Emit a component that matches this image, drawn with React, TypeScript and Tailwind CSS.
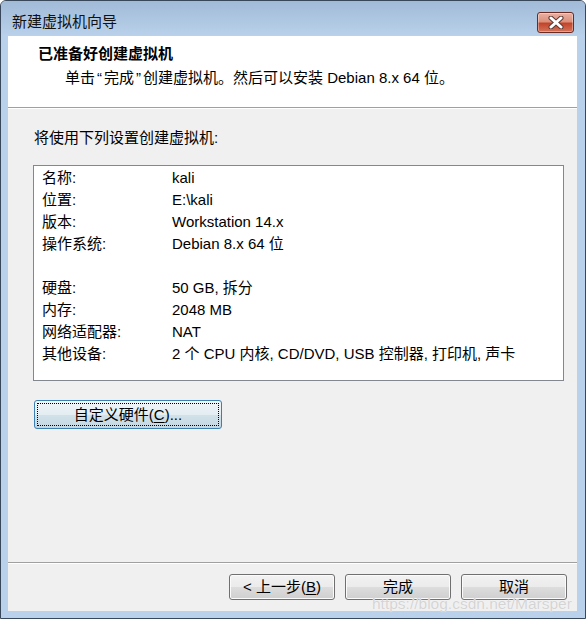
import React from 'react';

const FONT = "font-['Liberation_Sans','Noto_Sans_CJK_SC',sans-serif]";

const rows: [string, string][] = [
  ['名称:', 'kali'],
  ['位置:', 'E:\\kali'],
  ['版本:', 'Workstation 14.x'],
  ['操作系统:', 'Debian 8.x 64 位'],
  ['', ''],
  ['硬盘:', '50 GB, 拆分'],
  ['内存:', '2048 MB'],
  ['网络适配器:', 'NAT'],
  ['其他设备:', '2 个 CPU 内核, CD/DVD, USB 控制器, 打印机, 声卡'],
];

const CloseButton = () => (
  <div className="w-[37px] h-[21px] rounded-[3px] border border-[#6b2a22] bg-[linear-gradient(to_bottom,#eab0a2_0%,#dc907c_45%,#c2452b_55%,#d4735b_100%)] shadow-[inset_0_0_0_1px_rgba(255,255,255,0.35)] flex items-center justify-center">
    <svg width="16" height="13" viewBox="0 0 16 13">
      <path d="M3 2 L13 11 M13 2 L3 11" stroke="#5a3a36" strokeWidth="5" strokeLinecap="round" />
      <path d="M3 2 L13 11 M13 2 L3 11" stroke="#ffffff" strokeWidth="3" strokeLinecap="round" />
    </svg>
  </div>
);

const WinButton = ({ children }: { children: React.ReactNode }) => (
  <div className="w-[106px] h-[26px] rounded-[3px] border border-[#707070] bg-[linear-gradient(to_bottom,#f2f2f2_0%,#ebebeb_50%,#dddddd_50%,#cfcfcf_100%)] shadow-[inset_0_0_0_1px_#fbfbfb] flex items-center justify-center text-[15px] leading-[20px] text-black">
    {children}
  </div>
);

export default function App() {
  return (
    <div className={`w-[586px] h-[619px] bg-white ${FONT}`}>
      <div className="relative h-full rounded-t-[6px] border border-[#39475a] bg-[#b9d1ea] flex flex-col">
        {/* title bar */}
        <div className="h-[35px] rounded-t-[5px] bg-[linear-gradient(to_bottom,#a1bad7,#b9d1ea)] flex items-start justify-between pl-[11px] pr-[11px]">
          <span className="pt-[11px] text-[15px] leading-[20px] text-[#111]">新建虚拟机向导</span>
          <div className="pt-[11px]">
            <CloseButton />
          </div>
        </div>

        {/* client area */}
        <div className="flex-1 ml-[7px] mr-[8px] mb-[7px] bg-[#f0f0f0] flex flex-col">
          <div className="h-[72px] bg-white border-b border-[#a0a0a0] shadow-[0_1px_0_#ffffff] pt-[8px]">
            <div className="pl-[30px] text-[15px] leading-[20px] font-bold text-black">已准备好创建虚拟机</div>
            <div className="pl-[57px] mt-[4px] text-[15px] leading-[20px] text-black whitespace-nowrap">
              单击<span className="px-[2px]">“</span>完成<span className="px-[2px]">”</span>创建虚拟机。然后可以安装 Debian 8.x 64 位。
            </div>
          </div>

          <div className="pt-[20px] pl-[25px]">
            <div className="pl-[1px] text-[15px] leading-[20px] text-black">将使用下列设置创建虚拟机:</div>
            <div className="mt-[17px] w-[531px] h-[216px] bg-white border border-[#828790] pt-[1px] pl-[8px]">
              {rows.map(([k, v], i) => (
                <div key={i} className="flex h-[22px] items-center text-[15px] leading-[22px] text-black">
                  <span className="w-[130px] shrink-0">{k}</span>
                  <span className="whitespace-nowrap">{v}</span>
                </div>
              ))}
            </div>
            <div className="ml-[1px] mt-[19px] w-[188px] h-[29px] rounded-[3px] border border-[#3c7fb1] bg-[linear-gradient(to_bottom,#f1f6f9_0%,#e3edf2_50%,#d2e2ea_50%,#c4d7e1_100%)] p-[2px]">
              <div className="h-full border border-dotted border-black flex items-center justify-center text-[15px] leading-[20px] text-black">
                自定义硬件(<span className="underline underline-offset-2">C</span>)...
              </div>
            </div>
          </div>

          <div className="mt-auto border-t border-[#a0a0a0] shadow-[inset_0_1px_0_#ffffff] pt-[11px] pb-[11px] pr-[10px] flex justify-end gap-[10px]">
            <WinButton>&lt; 上一步(<span className="underline underline-offset-2">B</span>)</WinButton>
            <WinButton>完成</WinButton>
            <WinButton>取消</WinButton>
          </div>
        </div>

        {/* watermark overlay */}
        <div className="absolute left-[371px] top-[593px] text-[15.5px] leading-[20px] text-[#d4d4d4] [text-shadow:0_0_1px_#ffffff] pointer-events-none whitespace-nowrap">
          https://blog.csdn.net/Marsper
        </div>
      </div>
    </div>
  );
}
